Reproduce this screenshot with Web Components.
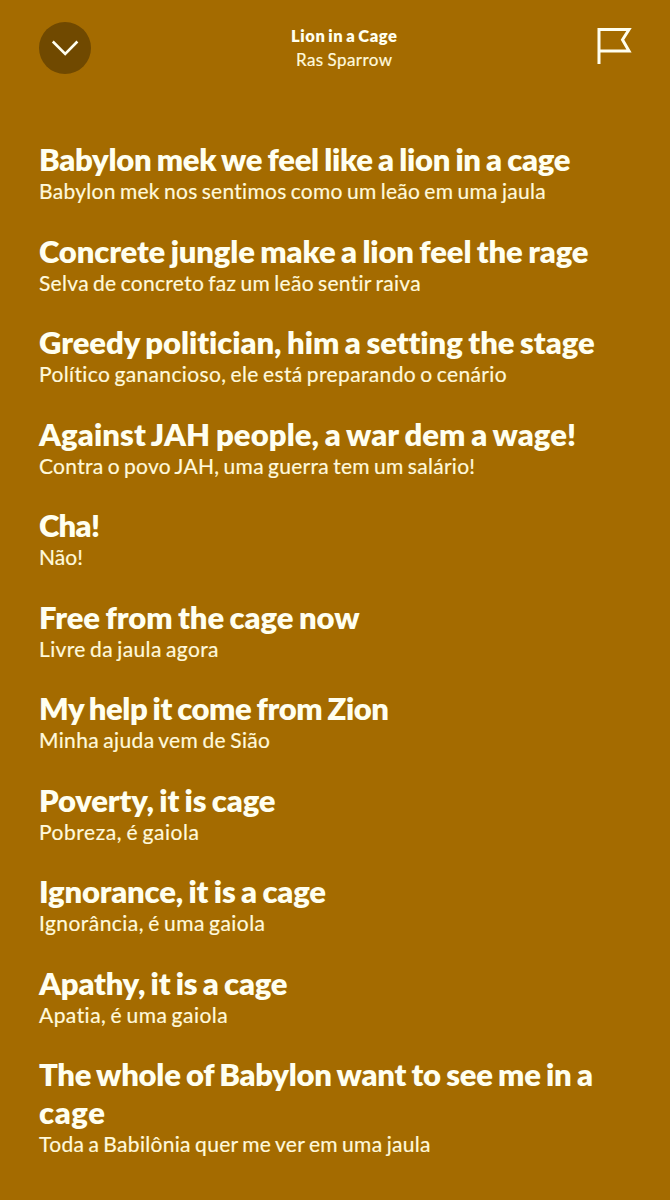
<!DOCTYPE html>
<html lang="en">
<head>
<meta charset="utf-8">
<title>Lyrics</title>
<style>
  body {
    margin: 0;
    background: #a46b00;
    font-family: Lato, "Liberation Sans", sans-serif;
  }
</style>
</head>
<body>
<lyrics-screen></lyrics-screen>

<script>
// One row of text, tracked so that it fills the given width
class FitText extends HTMLElement {
  constructor() {
    super();
    this.attachShadow({ mode: "open" });
    this.shadowRoot.innerHTML = `
      <style>
        :host { display: block; white-space: nowrap; }
        span { display: inline-block; }
      </style>
      <span><slot></slot></span>
    `;
  }

  connectedCallback() {
    const span = this.shadowRoot.querySelector("span");
    const extra = Number(this.getAttribute("width")) - span.getBoundingClientRect().width;
    span.style.letterSpacing = extra / (this.textContent.length - 1) + "px";
    span.style.marginRight = -extra / (this.textContent.length - 1) + "px";
  }
}

class LyricLine extends HTMLElement {
  constructor() {
    super();
    this.attachShadow({ mode: "open" });
    this.shadowRoot.innerHTML = `
      <style>
        :host { display: block; }
        .original {
          color: #fffff0;
          font-size: 31px;
          font-weight: 800;
          line-height: 38px;
          word-spacing: -1.5px;
        }
        .translation {
          margin-top: -1px;
          color: #fff9dc;
          font-size: 21px;
          line-height: 27px;
          word-spacing: -1.5px;
          -webkit-text-stroke: 0.2px;
        }
      </style>
      <div class="original"><slot></slot></div>
      <div class="translation"><slot name="translation"></slot></div>
    `;
  }
}

class LyricsHeader extends HTMLElement {
  constructor() {
    super();
    this.attachShadow({ mode: "open" });
    this.shadowRoot.innerHTML = `
      <style>
        :host {
          display: grid;
          grid-template-columns: 52px 1fr 36px;
          align-items: center;
          height: 52px;
          padding: 22px 37px 0 39px;
        }
        .close {
          width: 52px;
          height: 52px;
          border-radius: 50%;
          background: #704900;
        }
        svg { display: block; fill: none; stroke: #fffff0; }
        .names {
          display: flex;
          flex-direction: column;
          align-items: center;
          line-height: 23px;
        }
        .title {
          color: #fffff0;
          font-size: 16.5px;
          font-weight: 800;
          word-spacing: -1.5px;
        }
        .artist {
          color: #fff9dc;
          font-size: 17px;
          word-spacing: -1px;
          -webkit-text-stroke: 0.2px;
        }
        .flag { align-self: start; margin-top: 4px; }
      </style>
      <div class="close">
        <svg width="52" height="52" viewBox="0 0 52 52" stroke-width="2.6">
          <path d="M13.8 19.5 26.2 32 38.4 19.5"/>
        </svg>
      </div>
      <div class="names">
        <div class="title"><slot name="title"></slot></div>
        <div class="artist"><slot name="artist"></slot></div>
      </div>
      <svg class="flag" width="36" height="40" viewBox="0 0 36 40" stroke-width="3">
        <path d="M2 38V3.5H32L25.5 13.8 32 25H2"/>
      </svg>
    `;
  }
}

const LINES = [
  [[["Babylon mek we feel like a lion in a cage", 531.5]], "Babylon mek nos sentimos como um leão em uma jaula", 507],
  [[["Concrete jungle make a lion feel the rage", 549.5]], "Selva de concreto faz um leão sentir raiva", 382],
  [[["Greedy politician, him a setting the stage", 555]], "Político ganancioso, ele está preparando o cenário", 468],
  [[["Against JAH people, a war dem a wage!", 537]], "Contra o povo JAH, uma guerra tem um salário!", 436],
  [[["Cha!", 61]], "Não!", 44],
  [[["Free from the cage now", 320.5]], "Livre da jaula agora", 179.5],
  [[["My help it come from Zion", 350]], "Minha ajuda vem de Sião", 231],
  [[["Poverty, it is cage", 236.5]], "Pobreza, é gaiola", 160],
  [[["Ignorance, it is a cage", 287]], "Ignorância, é uma gaiola", 226],
  [[["Apathy, it is a cage", 248.5]], "Apatia, é uma gaiola", 189],
  [[["The whole of Babylon want to see me in a", 554], ["cage", 66]], "Toda a Babilônia quer me ver em uma jaula", 391.5],
];

class LyricsScreen extends HTMLElement {
  constructor() {
    super();
    this.attachShadow({ mode: "open" });
    const lines = LINES.map(([rows, translation, width]) => `
      <lyric-line>
        ${rows.map(([text, w]) => `<fit-text width="${w}">${text}</fit-text>`).join("")}
        <fit-text slot="translation" width="${width}">${translation}</fit-text>
      </lyric-line>
    `).join("");
    this.shadowRoot.innerHTML = `
      <style>
        :host {
          display: block;
          height: 1200px;
          overflow: hidden;
        }
        main {
          display: flex;
          flex-direction: column;
          gap: 27.5px;
          padding: 66px 39px 0;
        }
      </style>
      <lyrics-header>
        <fit-text slot="title" width="106">Lion in a Cage</fit-text>
        <fit-text slot="artist" width="96">Ras Sparrow</fit-text>
      </lyrics-header>
      <main>${lines}</main>
    `;
  }
}

customElements.define("lyric-line", LyricLine);
customElements.define("lyrics-header", LyricsHeader);
customElements.define("lyrics-screen", LyricsScreen);
customElements.define("fit-text", FitText);
</script>
</body>
</html>
